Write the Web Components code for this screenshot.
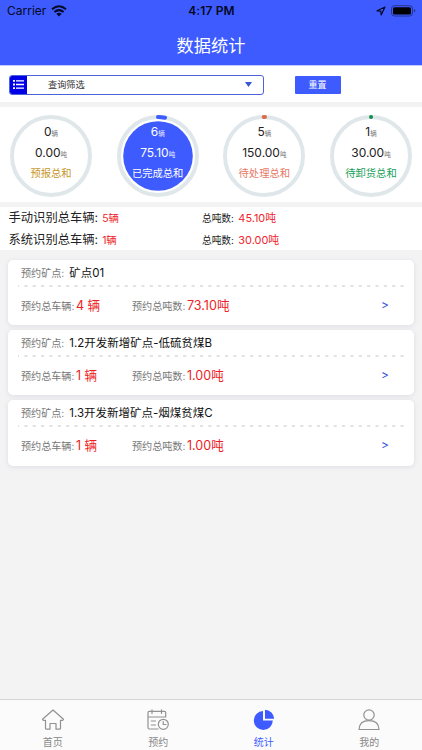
<!DOCTYPE html>
<html lang="zh-CN"><head><meta charset="utf-8"><title>数据统计</title>
<style>
body{margin:0;width:422px;height:750px;overflow:hidden;font-family:Inter,"Noto Sans CJK SC",sans-serif;background:#f3f3f4;color:#222}
</style></head><body>
<app-screen></app-screen>
<script>
const make=(name,render)=>customElements.define(name,class extends HTMLElement{
 connectedCallback(){if(!this.shadowRoot)this.attachShadow({mode:'open'}).innerHTML=render(k=>this.getAttribute(k)||'');}
});
make('status-bar',()=>`<style>
:host{display:flex;height:22px;align-items:center;justify-content:space-between;padding:0 6px 0 7px;color:#050924;font-size:12px;line-height:22px;box-sizing:border-box}
div{flex:1;display:flex;align-items:center}.l{gap:5px;letter-spacing:0}.c{justify-content:center;font-weight:600;letter-spacing:.15px}.r{justify-content:flex-end;gap:5px}
</style><div class="l"><span>Carrier</span><svg width="16" height="12" viewBox="0 0 16 12" fill="none" stroke="#050924" stroke-width="2.1"><path d="M1 4.3Q8-1.8 15 4.3M3.4 7Q8 3.1 12.6 7"/><path d="M5.4 8.7Q8 6.8 10.6 8.7L8 11.4Z" fill="#050924" stroke="none"/></svg></div>
<div class="c">4:17 PM</div>
<div class="r"><svg width="10" height="10" viewBox="0 0 10 10" fill="none" stroke="#050924" stroke-width="1.2" stroke-linejoin="round"><path d="M9 1L1 4.8L4.8 5.2L5.2 9Z"/></svg><svg width="25" height="12" viewBox="0 0 25 12"><rect x=".5" y=".7" width="21" height="10.3" rx="3" fill="none" stroke="#24358c"/><rect x="2" y="2.2" width="18" height="7.3" rx="1.6" fill="#000"/><path d="M23 4v3.6q1.3-.6 1.3-1.8T23 4" fill="#24358c"/></svg></div>`);
make('title-bar',()=>`<style>:host{display:block;height:43px;line-height:48px;text-align:center;color:#fff;font-size:17.2px}</style><slot></slot>`);
make('filter-bar',()=>`<style>
:host{display:flex;background:#fff;height:37px;padding:8.5px 0 0 9px;box-sizing:border-box;align-items:flex-start;border-top:1px solid #c3ccff}
.s{display:flex;align-items:center;width:255px;height:20px;box-sizing:border-box;border:1px solid #4c62d8;border-radius:3px;overflow:hidden;font-size:9.2px;color:#333}
.i{width:17px;height:20px;background:#0000e8;display:flex;align-items:center;justify-content:center}.t{flex:1;padding-left:21px;line-height:18px}.a{margin-right:11px}
.b{margin:1.5px 0 0 30.5px;width:46px;height:17.5px;border-radius:1px;background:#3d5bff;color:#fff;font-size:9px;line-height:17px;text-align:center}
svg{display:block}</style><div class="s"><span class="i"><svg width="11" height="11" viewBox="0 0 11 11" fill="#fff"><path d="M0 1h2v1.8H0zM3 1.2h8v1.4H3zM0 4.6h2v1.8H0zM3 4.8h8v1.4H3zM0 8.2h2V10H0zM3 8.4h8v1.4H3z"/></svg></span><span class="t">查询筛选</span><svg class="a" width="7" height="5" viewBox="0 0 7 5"><path d="M0 0h7L3.5 5z" fill="#3854d8"/></svg></div><div class="b">重置</div>`);
make('stat-ring',a=>{const on=a('active')==='1';return `<style>
:host{display:grid;width:82px;height:82px;color:${on?'#fff':'#222'}}svg,.t{grid-area:1/1}
.t{display:flex;flex-direction:column;align-items:center;white-space:nowrap;padding-top:7px;z-index:1}
.t div{height:20.5px;line-height:20.5px;font-size:12px}small{font-size:6.5px;color:${on?'#e8ecff':'#777'}}.t .n{font-size:10.3px;color:${a('color')}}
</style><svg width="82" height="82" viewBox="0 0 82 82"><circle cx="41" cy="41" r="39" fill="none" stroke="#e0e7ea" stroke-width="4"/>${on?'<circle cx="41" cy="41" r="34.8" fill="#3d5bff"/>':''}${a('arc')?`<path d="${a('arc')}" fill="none" stroke="${a('mark')}" stroke-width="4" stroke-linecap="round"/>`:''}</svg>
<div class="t"><div>${a('count')}<small>辆</small></div><div>${a('weight')}<small>吨</small></div><div class="n">${a('label')}</div></div>`});
make('summary-row',a=>`<style>:host{display:grid;grid-template-columns:193.5px 1fr;height:22px;line-height:22px;padding-left:8.5px;font-size:12.3px;white-space:nowrap}
b{font-weight:400;color:#f0242c;font-size:10.4px;margin-left:4px}.r{font-size:9.7px}.r b{font-size:10.9px;margin-left:4.5px}</style><div>${a('label')}:<b>${a('count')}</b></div><div class="r">总吨数:<b>${a('weight')}</b></div>`);
make('mine-card',a=>`<style>
:host{display:block;height:65.2px;background:#fff;border-radius:5px;box-sizing:border-box;padding:2px 10px 0 10px;box-shadow:0 1px 5px #dcdce5;font-size:10.1px;color:#777;white-space:nowrap}
.h{height:23px;line-height:23px;padding-left:3px}.h b{font-weight:400;color:#111;font-size:11.5px;margin-left:5px}
svg{display:block}.d{display:grid;grid-template-columns:111px 1fr 28px;line-height:21px;padding:8px 0 0 3px}.d b{font-weight:400;color:#ee1c25;font-size:12.6px;margin-left:1.5px}.d i{font-style:normal;color:#3854d8;font-size:12px;line-height:19px;margin-left:5px}
</style><div class="h">预约矿点:<b>${a('name')}</b></div><svg width="386" height="2"><path d="M0 1H386" stroke="#c5c5c5" stroke-dasharray="3.1 5.26" stroke-dashoffset="2"/></svg><div class="d"><span>预约总车辆:<b>${a('count')} 辆</b></span><span>预约总吨数:<b>${a('weight')}吨</b></span><i>&gt;</i></div>`);
make('tab-item',a=>`<style>:host{display:flex;flex-direction:column;align-items:center;flex:1;padding-top:9px;color:${a('active')?'#3d5bff':'#888'};font-size:10px;line-height:15px}svg{display:block;margin-bottom:3px}span{margin-top:1.5px}</style><slot></slot><span>${a('label')}</span>`);
make('tab-icon',a=>`<style>:host{display:block;height:24px}svg{display:block}</style><svg width="24" height="22" viewBox="0 0 24 22" fill="none" stroke="#929292" stroke-width="1.2" stroke-linejoin="round" stroke-linecap="round">${({
home:'<path d="M12 1L1.5 10.3Q1.6 11.7 4.5 11.3V19.2Q4.5 20.2 5.5 20.2H9V14.5H15V20.2H18.5Q19.5 20.2 19.5 19.2V11.3Q22.4 11.7 22.5 10.3Z"/>',
cal:'<path d="M12 20H3.2Q2 20 2 18.8V3.5Q2 2.3 3.2 2.3H18.5Q19.7 2.3 19.7 3.5V8H2M6 .8V4.5M15.5 .8V4.5M5.3 12H9.5M5.3 16H9.5"/><circle cx="17.3" cy="15.3" r="5"/><path d="M17.2 12.5V15.5H20"/>',
pie:'<path d="M11 2A9.5 9.5 0 1 0 20.8 11.6H11Z" fill="#3d5bff" stroke="none"/><path d="M13 .8A9.5 9.5 0 0 1 22.2 9.8H13Z" fill="#3d5bff" stroke="none"/>',
me:'<circle cx="12" cy="6" r="5.2"/><path d="M2 20.5Q2.3 11.6 12 11.6T22 20.5Z"/>'})[a('name')]}</svg>`);
make('app-screen',()=>`<style>
:host{display:flex;flex-direction:column;height:750px}header{background:#3d5bff;height:65px}
.st{display:flex;justify-content:space-between;box-sizing:border-box;background:#fff;margin-top:5px;height:95px;padding:8.3px 10px 0}
.su{background:#fff;margin-top:5px;height:43px}.c{display:flex;flex-direction:column;gap:5px;padding:10px 8px;flex:1}
nav{display:flex;height:50px;background:#fbfbfb;border-top:1px solid #d5d5d5}
</style><header><status-bar></status-bar><title-bar>数据统计</title-bar></header><filter-bar></filter-bar>
<div class="st"><stat-ring count="0" weight="0.00" label="预报总和" color="#c7962b"></stat-ring>
<stat-ring active="1" count="6" weight="75.10" label="已完成总和" color="#fff" mark="#3d5bff" arc="M41 2A39 39 0 0 1 48 2.7"></stat-ring>
<stat-ring count="5" weight="150.00" label="待处理总和" color="#e87865" mark="#dd6c4d" arc="M40.7 2H42"></stat-ring>
<stat-ring count="1" weight="30.00" label="待卸货总和" color="#17a05a" mark="#159052" arc="M41 2H41.1"></stat-ring></div>
<div class="su"><summary-row label="手动识别总车辆" count="5辆" weight="45.10吨"></summary-row><summary-row label="系统识别总车辆" count="1辆" weight="30.00吨"></summary-row></div>
<div class="c"><mine-card name="矿点01" count="4" weight="73.10"></mine-card><mine-card name="1.2开发新增矿点-低硫贫煤B" count="1" weight="1.00"></mine-card><mine-card name="1.3开发新增矿点-烟煤贫煤C" count="1" weight="1.00"></mine-card></div>
<nav><tab-item label="首页"><tab-icon name="home"></tab-icon></tab-item><tab-item label="预约"><tab-icon name="cal"></tab-icon></tab-item><tab-item label="统计" active="1"><tab-icon name="pie"></tab-icon></tab-item><tab-item label="我的"><tab-icon name="me"></tab-icon></tab-item></nav>`);
</script></body></html>
